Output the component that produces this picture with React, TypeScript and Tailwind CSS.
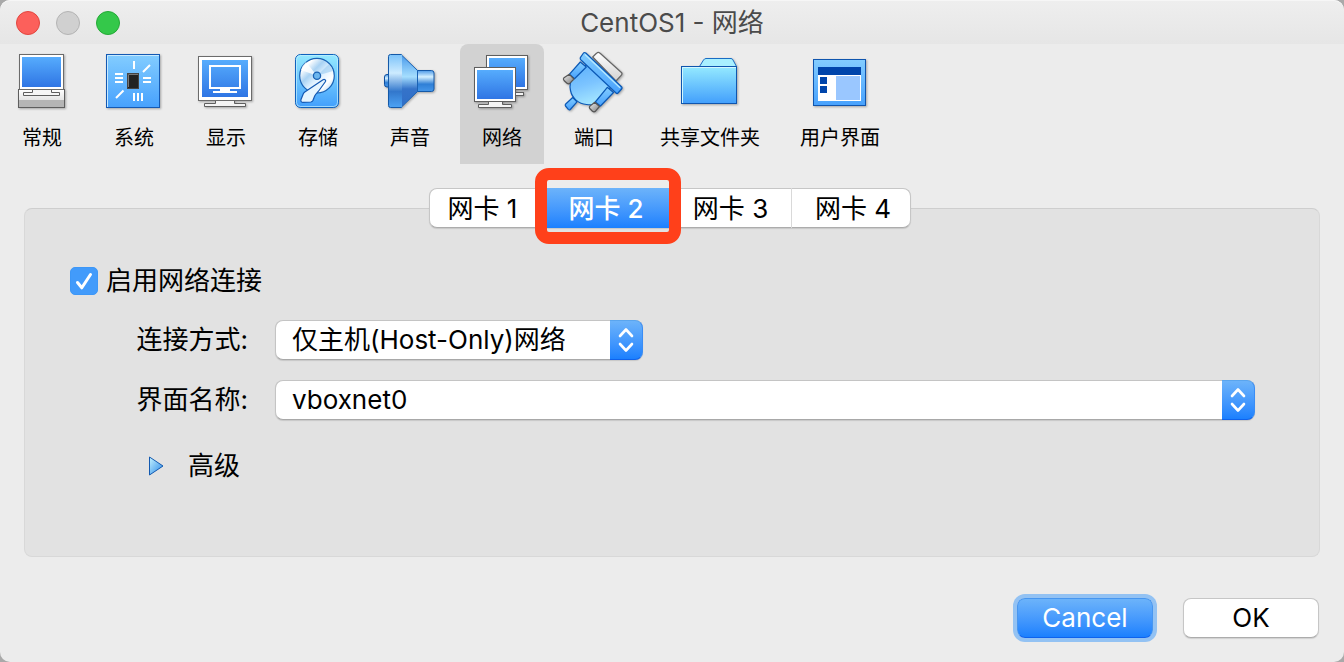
import { useState } from "react";
import type { ReactNode } from "react";

function Icon({ children }: { children: ReactNode }) {
  return (
    <svg viewBox="0 0 64 64" className="size-16 drop-shadow-[1px_1px_1px_rgba(0,0,0,0.3)]" fill="none" aria-hidden="true">
      {children}
    </svg>
  );
}

function Gradients() {
  return (
    <svg className="absolute size-0" aria-hidden="true">
      <defs>
        <linearGradient id="screen" x1="0" y1="0" x2="0" y2="1">
          <stop offset="0" stopColor="#56acfd" />
          <stop offset="1" stopColor="#2f75e4" />
        </linearGradient>
        <linearGradient id="sky" x1="0" y1="0" x2="0" y2="1">
          <stop offset="0" stopColor="#83cdff" />
          <stop offset="1" stopColor="#47a1fd" />
        </linearGradient>
        <linearGradient id="aqua" x1="0" y1="0" x2="0" y2="1">
          <stop offset="0" stopColor="#95eaff" />
          <stop offset="1" stopColor="#429ffc" />
        </linearGradient>
        <linearGradient id="body" x1="0.3" y1="0" x2="0.6" y2="1">
          <stop offset="0" stopColor="#5cb0fb" />
          <stop offset="0.5" stopColor="#7cc4ff" />
          <stop offset="1" stopColor="#a9eaff" />
        </linearGradient>
        <linearGradient id="tube" x1="0" y1="0" x2="0" y2="1">
          <stop offset="0" stopColor="#4d9ae8" />
          <stop offset="0.3" stopColor="#d4f0ff" />
          <stop offset="0.65" stopColor="#2f7fd6" />
          <stop offset="1" stopColor="#4597ea" />
        </linearGradient>
        <linearGradient id="plate" x1="0" y1="0" x2="0" y2="1">
          <stop offset="0" stopColor="#7cc3fa" />
          <stop offset="0.35" stopColor="#cdebff" />
          <stop offset="0.7" stopColor="#3277cc" />
          <stop offset="1" stopColor="#4da3f4" />
        </linearGradient>
        <linearGradient id="cone" x1="0" y1="0" x2="0" y2="1">
          <stop offset="0" stopColor="#4798ea" />
          <stop offset="0.42" stopColor="#a5defe" />
          <stop offset="0.65" stopColor="#3573c9" />
          <stop offset="1" stopColor="#2f6fc8" />
        </linearGradient>
        <linearGradient id="grey" x1="0" y1="0" x2="0" y2="1">
          <stop offset="0" stopColor="#ffffff" />
          <stop offset="1" stopColor="#d2d2d2" />
        </linearGradient>
        <linearGradient id="knob" x1="0" y1="0" x2="1" y2="1">
          <stop offset="0" stopColor="#efefef" />
          <stop offset="1" stopColor="#7c7c7c" />
        </linearGradient>
        <linearGradient id="disc" x1="0" y1="0" x2="1" y2="1">
          <stop offset="0" stopColor="#ffffff" />
          <stop offset="0.2" stopColor="#ffffff" />
          <stop offset="0.38" stopColor="#a9d2f3" />
          <stop offset="0.55" stopColor="#dff1ff" />
          <stop offset="0.75" stopColor="#ffffff" />
          <stop offset="1" stopColor="#8fc5f2" />
        </linearGradient>
        <linearGradient id="arrow" x1="0" y1="0" x2="1" y2="1">
          <stop offset="0" stopColor="#c8f4ff" />
          <stop offset="1" stopColor="#2385e8" />
        </linearGradient>
      </defs>
    </svg>
  );
}

const general = (
  <Icon>
    <rect x="8.5" y="39.5" width="46" height="18" fill="url(#grey)" stroke="#5e5e5e" />
    <rect x="9" y="50" width="45" height="7" fill="#b5b5b5" />
    <rect x="9.5" y="4.5" width="44" height="35" fill="#fff" stroke="#6b6b6b" />
    <rect x="12" y="7" width="39" height="30" fill="url(#screen)" />
    <path d="M22.5 40v2.5h-9v3h36v-3h-8V40" fill="#f6f6f6" stroke="#5e5e5e" />
  </Icon>
);

const system = (
  <Icon>
    <rect x="4.5" y="4.5" width="53" height="53" fill="url(#sky)" stroke="#1459b3" />
    <path d="M5.5 57V5.5H57" stroke="#c7eaff" />
    <rect x="25.5" y="23.5" width="11" height="15" fill="#222" stroke="#444" />
    <path d="M26.5 37V24.5H36" stroke="#777" />
    <path
      d="M32 11v8M41 22l7-7M13 24h8M13 28h8M13 32h8M41 28h8M41 32h8M14 48l7.500-7.500M32 43v8M36 43v8M40 43v8"
      stroke="#fff"
      strokeWidth="2"
    />
  </Icon>
);

const display = (
  <Icon>
    <path d="M21.5 50v3.500h-11v3h41v-3h-11V50" fill="#f4f4f4" stroke="#5e5e5e" />
    <rect x="4.5" y="6.5" width="53" height="44" fill="#fff" stroke="#6b6b6b" />
    <rect x="8" y="10" width="46" height="37" fill="url(#screen)" />
    <rect x="16" y="16" width="30" height="22" stroke="#fff" strokeWidth="2" />
    <path d="M26 38h10v3h7v2H19v-2h7z" fill="#fff" />
  </Icon>
);

const storage = (
  <Icon>
    <rect x="9.5" y="4.5" width="43" height="53" rx="5" fill="url(#aqua)" stroke="#0f62bd" />
    <rect x="10.5" y="5.5" width="41" height="51" rx="4" stroke="#c3efff" strokeOpacity="0.7" />
    <circle cx="31" cy="25.7" r="17.3" fill="url(#disc)" stroke="#1a62b4" strokeWidth="1.2" />
    <path d="M31 25.700 15 20a17 17 0 0 1 5-8z" fill="#fff" opacity="0.8" />
    <path d="M31 25.700 43 14a17 17 0 0 1 4 7z" fill="#9bcbf0" opacity="0.6" />
    <circle cx="31" cy="25.7" r="3.6" fill="#6cb6ee" stroke="#1a62b4" strokeWidth="1.3" />
    <path
      d="M37 29.700C38.500 28.700 40.200 30 39.500 31.500L33 40.500C31.500 42.500 29.500 44 28.700 46L26.900 50.500Q26.300 51.900 24.800 52L16.800 52.300Q14.300 52 15 49.500L17.200 44Q17.700 42.800 18.800 42Z"
      fill="#e6f5ff"
      stroke="#1459b3"
      strokeWidth="1.2"
      strokeLinejoin="round"
    />
  </Icon>
);

const audio = (
  <Icon>
    <rect x="6.5" y="24.5" width="6" height="12.5" rx="2.5" fill="url(#tube)" stroke="#0f4f9f" />
    <path d="M39 20.500h14.500q2.500 0 2.500 2.500v16q0 2.500-2.500 2.500H39z" fill="url(#tube)" stroke="#1459a8" />
    <path d="M23 4.500 39.500 20.500v21L23 57.500z" fill="url(#cone)" stroke="#1a62b4" />
    <path d="M12.500 4.500H24v53H12.500q-2 0-2-2v-49q0-2 2-2z" fill="url(#plate)" />
    <path d="M23.500 4.500H12.500q-2 0-2 2v49q0 2 2 2H23.500" stroke="#1459a8" />
  </Icon>
);

const network = (
  <Icon>
    <rect x="30.5" y="42.5" width="23" height="3" fill="#f4f4f4" stroke="#5e5e5e" />
    <rect x="16.5" y="5.5" width="41" height="34" fill="#fff" stroke="#5e5e5e" />
    <rect x="19" y="8" width="36" height="29" fill="url(#screen)" />
    <path d="M18.5 51v3.500h-10v3h33v-3h-9V51" fill="#f4f4f4" stroke="#5e5e5e" />
    <rect x="4.5" y="17.5" width="41" height="34" fill="#fff" stroke="#5e5e5e" />
    <rect x="7" y="20" width="36" height="29" fill="url(#screen)" />
  </Icon>
);

const ports = (
  <Icon>
    <g strokeLinejoin="round" strokeWidth="1.2">
      <path d="M34.500 3.300q1.800-1.800 3.600 0L59.400 22.500q1.200 1.300 0 2.600L54 31 30.700 7z" fill="url(#grey)" stroke="#666" />
      <path d="M10.700 47.500 15 51.800 8.300 59.500Q7.300 60.300 6.300 59.300L3.500 56Q2.700 55 3.700 54z" fill="url(#sky)" stroke="#0b58b5" />
      <path
        d="M25 14.500C19 18.500 14 22.500 11.300 26.500C8.500 30.500 7.500 36 8.500 40.500C10 48 16.500 54 24.500 54.500C30 55.500 35.500 54.500 39 50.500C43 46 46 41.500 49 36.500L26 12.500Z"
        fill="url(#body)"
        stroke="#0b58b5"
      />
      <path d="M18.300 12 24.300 17 12.500 28.700 7.300 24.300z" fill="url(#sky)" stroke="#0b58b5" />
      <path d="m7.300 24.300 4.700 4.700-4 4.200q-1.500 1.300-3 0L2 30.500q-1.200-1.500 0-2.800z" fill="url(#knob)" stroke="#555" />
      <path d="M45.300 37.300 51.500 42.500 38.500 56 33.300 52z" fill="url(#sky)" stroke="#0b58b5" />
      <path d="m32.700 52.300 4.800 4.200-4 4.700q-1.500 1.300-3 0l-2.500-2.400q-1.200-1.500 0-2.700z" fill="url(#knob)" stroke="#555" />
      <path d="M21.500 3Q22.600 2 23.800 3L59.500 36.700Q60.500 37.800 59.600 39L56 43Q55 44 54 43L19 10Q17.800 8.800 18.500 7.300z" fill="url(#sky)" stroke="#0b58b5" />
      <path d="M23 4.500 58 37.800" stroke="#b7e9ff" />
    </g>
  </Icon>
);

const folder = (
  <Icon>
    <path d="M21.5 16.500 25.500 10q1-1.500 2.500-1.500h25q1.500 0 2 1.500l3.500 6.500z" fill="#a9f0ff" stroke="#1a6cc4" />
    <rect x="3.5" y="16.5" width="55" height="37" fill="url(#aqua)" stroke="#0f55ae" />
    <path d="M4.500 53V17.500H58" stroke="#d3f7ff" />
  </Icon>
);

const userInterface = (
  <Icon>
    <rect x="5.5" y="9.5" width="52" height="46" fill="url(#sky)" stroke="#0f55ae" />
    <rect x="10" y="17" width="43" height="8" fill="#0045ab" />
    <rect x="10" y="25" width="43" height="26" fill="#fff" />
    <rect x="28" y="26" width="24" height="24" fill="#9ac7ff" />
    <rect x="12" y="27" width="7" height="7" fill="#0045ab" />
    <rect x="12" y="36" width="7" height="7" fill="#0045ab" />
  </Icon>
);

const sections: { label: string; icon: ReactNode }[] = [
  { label: "常规", icon: general },
  { label: "系统", icon: system },
  { label: "显示", icon: display },
  { label: "存储", icon: storage },
  { label: "声音", icon: audio },
  { label: "网络", icon: network },
  { label: "端口", icon: ports },
  { label: "共享文件夹", icon: folder },
  { label: "用户界面", icon: userInterface },
];

const adapters = [
  { label: "网卡 1", size: "w-[116px] pr-2.5" },
  { label: "网卡 2", size: "w-[124px] pr-1" },
  { label: "网卡 3", size: "w-[122px]" },
  { label: "网卡 4", size: "w-[118px] pl-1" },
];

function PopUp({ id, options, width }: { id: string; options: string[]; width: string }) {
  return (
    <div className={`relative h-10 ${width}`}>
      <select
        id={id}
        className="h-10 w-full appearance-none rounded-lg border border-[#c4c4c4] border-b-[#a8a8a8] bg-white pr-10 pl-4 leading-9 shadow-[0_1px_1px_rgba(0,0,0,0.12)] outline-none"
      >
        {options.map((o) => (
          <option key={o}>{o}</option>
        ))}
      </select>
      <span className="pointer-events-none absolute inset-y-0 right-0 flex w-[33px] items-center justify-center rounded-r-lg border-y border-r border-t-[#5aa5ee] border-r-[#3a8df5] border-b-[#0f62ec] bg-linear-to-b from-[#6cb3fa] to-[#1a80fe]">
        <svg viewBox="0 0 16 26" className="h-[26px] w-4" fill="none" stroke="#fff" strokeWidth="2.6" strokeLinecap="round" strokeLinejoin="round" aria-hidden="true">
          <path d="M2 9 8 2.500 14 9M2 17l6 6.500L14 17" />
        </svg>
      </span>
    </div>
  );
}

export default function App() {
  const [section, setSection] = useState("网络");
  const [adapter, setAdapter] = useState("网卡 2");
  const [enabled, setEnabled] = useState(true);

  return (
    <div className="min-h-screen bg-[#a9a9a9]">
      <Gradients />
      <main className="flex min-h-screen flex-col rounded-[10px] bg-[#ececec] font-[Inter,'Noto_Sans_CJK_SC',sans-serif] text-[26px] leading-9 text-black">
        <header className="grid h-11 grid-cols-[1fr_auto_1fr] items-center rounded-t-[10px] border-t border-[#f6f6f6] bg-linear-to-b from-[#eeeeee] to-[#e6e6e6] px-4">
          <div className="flex gap-4">
            <button aria-label="关闭" className="size-6 rounded-full border border-[#e2463f] bg-[#fc605b]" />
            <button aria-label="最小化" className="size-6 rounded-full border border-[#b4b4b4] bg-[#d0d0d0]" />
            <button aria-label="缩放" className="size-6 rounded-full border border-[#24a936] bg-[#34c84a]" />
          </div>
          <h1 className="text-[#4b4b4b]">CentOS1 - 网络</h1>
        </header>

        <nav className="flex gap-2 text-xl">
          {sections.map((s) => (
            <button
              key={s.label}
              onClick={() => setSection(s.label)}
              className={`flex h-[120px] min-w-[84px] flex-col items-center rounded-t-lg px-4 pt-1.5 ${section === s.label ? "bg-[#d2d2d2]" : ""}`}
            >
              <span className="flex w-[52px] justify-center">
                <span className="shrink-0">{s.icon}</span>
              </span>
              <span className="mt-2.5 leading-7 whitespace-nowrap">{s.label}</span>
            </button>
          ))}
        </nav>

        <section className="mx-6 mt-11 flex flex-col rounded-lg border border-[#d8d8d8] border-t-[#cecece] bg-[#e2e2e2] pb-[72px]">
          <div role="tablist" className="-mt-[21px] mr-1 flex h-10 self-center rounded-lg border border-[#c6c6c6] border-b-[#acacac] bg-white shadow-[0_1px_1px_rgba(0,0,0,0.12)]">
            {adapters.map((a) => (
              <button
                key={a.label}
                role="tab"
                aria-selected={adapter === a.label}
                onClick={() => setAdapter(a.label)}
                className={`relative -my-px flex h-10 items-center justify-center pt-0.5 whitespace-nowrap ${a.size} ${
                  adapter === a.label
                    ? "bg-linear-to-b from-[#6cb3fa] to-[#1a80fe] font-medium text-white"
                    : "border-r border-[#d9d9d9] last:border-r-0"
                }`}
              >
                {a.label}
                {a.label === "网卡 2" && (
                  <span className="pointer-events-none absolute -inset-x-[11px] -top-5 -bottom-4 z-10 rounded-[14px] border-12 border-[#ff401a]" />
                )}
              </button>
            ))}
          </div>

          <div className="flex flex-col pt-[35px] pr-16 pl-[45px]">
            <label className="flex items-center gap-2 self-start">
              <span className="relative flex size-7">
                <input
                  type="checkbox"
                  checked={enabled}
                  onChange={(e) => setEnabled(e.target.checked)}
                  className="size-7 appearance-none rounded-[5px] border border-[#b4b4b4] bg-white checked:border-[#3d97f7] checked:bg-[#429bfb]"
                />
                {enabled && (
                  <svg viewBox="0 0 28 28" className="pointer-events-none absolute inset-0 size-7" fill="none" stroke="#fff" strokeWidth="3" strokeLinecap="round" strokeLinejoin="round" aria-hidden="true">
                    <path d="m7.500 15.500 4.300 5.300L20.500 7.500" />
                  </svg>
                )}
              </span>
              启用网络连接
            </label>

            <div className="mt-[21px] grid grid-cols-[178px_1fr] items-center gap-x-[27px] gap-y-5">
              <label htmlFor="attachment" className="text-right">连接方式:</label>
              <PopUp id="attachment" options={["仅主机(Host-Only)网络"]} width="w-[368px]" />
              <label htmlFor="interface" className="text-right">界面名称:</label>
              <PopUp id="interface" options={["vboxnet0"]} width="w-full" />
            </div>

            <button className="mt-7 ml-[78px] flex items-center gap-6 self-start">
              <svg viewBox="0 0 16 20" className="h-5 w-4" aria-hidden="true">
                <path d="M1.500 1v18L15 10z" fill="url(#arrow)" stroke="#1259b0" strokeLinejoin="round" />
              </svg>
              高级
            </button>
          </div>
        </section>

        <footer className="mt-[41px] flex justify-end gap-[30px] pr-[25px] pb-[23px]">
          <button className="h-10 w-[136px] rounded-lg border border-[#4796f0] border-b-[#0f62ec] bg-linear-to-b from-[#6cb3fa] to-[#1a80fe] text-white ring-4 ring-[#93c2f3]">
            Cancel
          </button>
          <button className="h-10 w-[136px] rounded-lg border border-[#c6c6c6] border-b-[#acacac] bg-white shadow-[0_1px_1px_rgba(0,0,0,0.12)]">
            OK
          </button>
        </footer>
      </main>
    </div>
  );
}
